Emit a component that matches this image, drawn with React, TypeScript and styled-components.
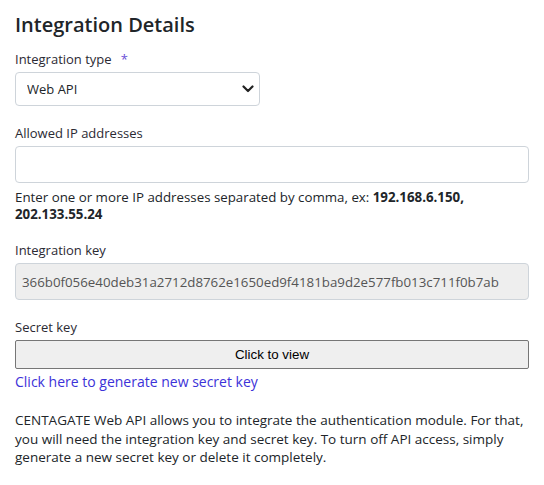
import React from 'react';
import styled, { createGlobalStyle } from 'styled-components';

const GlobalStyle = createGlobalStyle`
  body {
    margin: 0;
    background: #ffffff;
    font-family: 'Open Sans', 'Noto Sans', sans-serif;
    color: #212529;
  }
`;

const Page = styled.div`
  padding: 12px 15px 20px;
`;

const Title = styled.h2`
  margin: 0 0 12px;
  font-size: 20px;
  line-height: 26px;
  font-weight: 600;
  color: #212529;
`;

const Field = styled.div<{ $gap?: number }>`
  margin-bottom: ${p => p.$gap ?? 18}px;
`;

const Label = styled.label`
  display: block;
  margin-bottom: 4px;
  font-size: 13px;
  line-height: 18px;
  color: #2b2a33;
`;

const Required = styled.span`
  margin-left: 9px;
  color: #6a4fd6;
`;

const SelectWrap = styled.div`
  position: relative;
  width: 245px;
`;

const Select = styled.select`
  appearance: none;
  display: block;
  width: 100%;
  height: 34px;
  padding: 0 32px 0 11px;
  border: 1px solid #ced4da;
  border-radius: 4px;
  background: #fff;
  font-family: inherit;
  font-size: 13px;
  color: #212529;
`;

const Chevron = styled.svg`
  position: absolute;
  right: 6px;
  top: 13px;
  pointer-events: none;
`;

const TextInput = styled.input<{ $readOnly?: boolean }>`
  box-sizing: border-box;
  display: block;
  width: 100%;
  height: 37px;
  padding: 0 6px;
  border: 1px solid #ced4da;
  border-radius: 4px;
  background: ${p => (p.$readOnly ? '#eeeeee' : '#ffffff')};
  font-family: inherit;
  font-size: 13.3px;
  color: #555555;
  outline: none;
`;

const Hint = styled.p`
  margin: 6px 0 0;
  font-size: 13.3px;
  line-height: 17px;
  color: #212529;

  b {
    font-weight: 700;
  }
`;

const ViewButton = styled.button`
  display: block;
  width: 100%;
  height: 29px;
  border: 1px solid #767676;
  border-radius: 2px;
  background: #efefef;
  font-family: 'Liberation Sans', Arial, sans-serif;
  font-size: 13.33px;
  color: #000;
`;

const GenerateLink = styled.a`
  display: inline-block;
  margin-top: 3px;
  font-size: 14px;
  line-height: 20px;
  color: #3c32d8;
  text-decoration: none;
  cursor: pointer;
`;

const Description = styled.p`
  margin: 19px 0 0;
  font-size: 13.5px;
  line-height: 18.5px;
  color: #212529;
`;

const INTEGRATION_KEY = '366b0f056e40deb31a2712d8762e1650ed9f4181ba9d2e577fb013c711f0b7ab';

export default function App() {
  return (
    <Page>
      <GlobalStyle />
      <Title>Integration Details</Title>

      <Field>
        <Label>
          Integration type<Required>*</Required>
        </Label>
        <SelectWrap>
          <Select defaultValue="web">
            <option value="web">Web API</option>
          </Select>
          <Chevron width="12" height="8" viewBox="0 0 12 8">
            <path d="M1.5 1.5 6 6l4.5-4.5" fill="none" stroke="#222" strokeWidth="2.2" strokeLinecap="round" strokeLinejoin="round" />
          </Chevron>
        </SelectWrap>
      </Field>

      <Field>
        <Label>Allowed IP addresses</Label>
        <TextInput />
        <Hint>
          Enter one or more IP addresses separated by comma, ex: <b>192.168.6.150, 202.133.55.24</b>
        </Hint>
      </Field>

      <Field>
        <Label>Integration key</Label>
        <TextInput $readOnly readOnly value={INTEGRATION_KEY} />
      </Field>

      <Field $gap={0}>
        <Label>Secret key</Label>
        <ViewButton>Click to view</ViewButton>
        <GenerateLink>Click here to generate new secret key</GenerateLink>
      </Field>

      <Description>
        CENTAGATE Web API allows you to integrate the authentication module. For that, you will need the
        integration key and secret key. To turn off API access, simply generate a new secret key or delete it
        completely.
      </Description>
    </Page>
  );
}
